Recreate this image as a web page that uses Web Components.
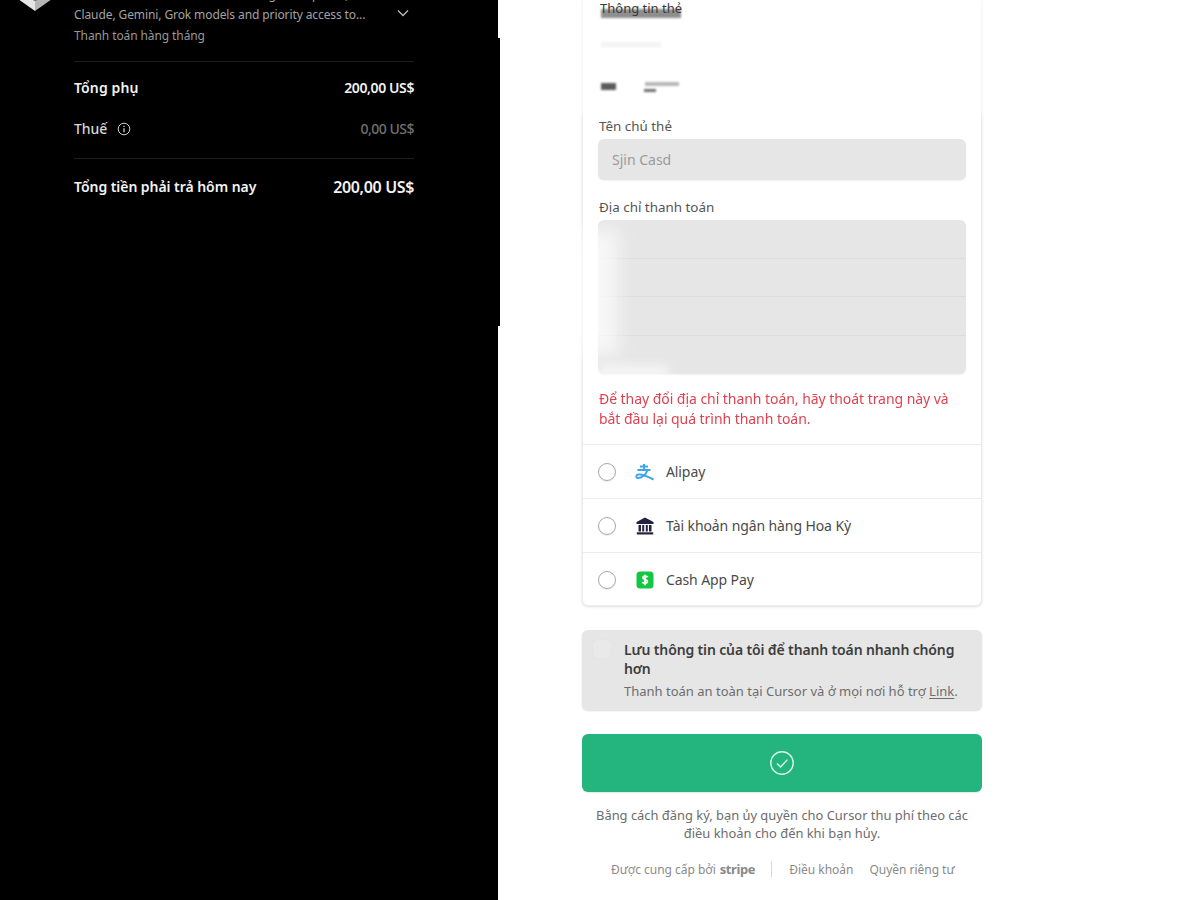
<!DOCTYPE html>
<html lang="vi"><head><meta charset="utf-8">
<style>
html,body{margin:0;height:900px;overflow:hidden;background:#fff}
body{font-family:"Noto Sans","Open Sans",sans-serif}
</style></head><body>
<checkout-page>
  <order-summary slot="left"></order-summary>
  <payment-form slot="right"></payment-form>
</checkout-page>
<script>
function def(name, html){
  customElements.define(name, class extends HTMLElement{
    constructor(){super();this.attachShadow({mode:'open'}).innerHTML=html;}
  });
}
def('checkout-page',`<style>
:host{display:flex;height:900px;width:1200px;overflow:hidden;position:relative}
.l{width:498px;flex:none;background:#000}
.r{flex:1;background:#fff;min-width:0}
.edge{position:absolute;left:498px;top:38px;width:2px;height:288px;background:#000}
</style><div class="l"><slot name="left"></slot></div><div class="r"><slot name="right"></slot></div><div class="edge"></div>`);

def('summary-row',`<style>
:host{display:flex;justify-content:space-between;align-items:center;font-size:14px;font-weight:600;color:#f2f2f2;letter-spacing:-.05px}
</style><slot></slot><slot name="v"></slot>`);

def('order-summary',`<style>
:host{display:block;color:#fff;font-family:"Noto Sans",sans-serif}
.top{display:grid;grid-template-columns:74px 1fr;margin-top:-15px;padding-right:84px;height:76px;box-sizing:border-box}
.logo{width:38px;height:26px;margin:0 0 0 16px;overflow:visible}
.desc{font-size:12px;line-height:20px;color:#a3a3a3;letter-spacing:-.1px;position:relative;white-space:nowrap}
.chev{position:absolute;right:4px;top:21px;width:14px;height:14px}
.pay{margin-top:1px;color:#989898}
.sec{margin:0 84px 0 74px;border-top:1px solid #1c1c1c}
.a{padding-top:16px;line-height:20px}
.b{margin-top:21px;line-height:20px}
.t2{margin-top:19px;padding-top:18px;line-height:20px}
.amt{letter-spacing:-.4px}
.tax{display:inline-flex;align-items:center;gap:10px;font-weight:500;color:#d6d6d6}
.zero{color:#707070;font-weight:500;font-size:14px;letter-spacing:-.5px}
.big{font-size:16px;letter-spacing:-.35px}
.lab{letter-spacing:.12px}
</style>
<div class="top">
  <svg class="logo" viewBox="0 0 38 26"><path d="M2 8 19 0 36 8 19 16Z" fill="#8f8f8f"/><path d="M2 8 19 16V26L2 14Z" fill="#e6e6e6"/><path d="M36 8 19 16V26L36 14Z" fill="#b5b5b5"/></svg>
  <div class="desc">Cursor Ultra includes 20x more usage on OpenAI,<br>Claude, Gemini, Grok models and priority access to...<div class="pay">Thanh toán hàng tháng</div>
    <svg class="chev" viewBox="0 0 14 14" fill="none" stroke="#bdbdbd" stroke-width="1.3"><path d="M2 4.5 7 9.5 12 4.5"/></svg>
  </div>
</div>
<div class="sec a"><summary-row><span class="lab">Tổng phụ</span><span slot="v" class="amt">200,00 US$</span></summary-row>
<div class="b"><summary-row><span class="tax">Thuế <svg width="14" height="14" viewBox="0 0 14 14" fill="none" stroke="#cfcfcf"><circle cx="7" cy="7" r="5.8"/><path d="M7 6.2V10.2M7 3.8V5" stroke-width="1.3"/></svg></span><span slot="v" class="zero">0,00 US$</span></summary-row></div></div>
<div class="sec t2"><summary-row><span>Tổng tiền phải trả hôm nay</span><span slot="v" class="big">200,00 US$</span></summary-row></div>`);

def('field-label',`<style>:host{display:block;font-size:13.4px;line-height:18px;color:#545454;padding-left:1px}</style><slot></slot>`);

def('pay-option',`<style>
:host{display:flex;align-items:center;height:53px;border-top:1px solid #ececec;padding-left:15px;font-size:14px;color:#4a4a4a;letter-spacing:-.1px}
.radio{width:16px;height:16px;border:1px solid #a8a8a8;border-radius:50%;flex:none;box-shadow:0 1px 1px rgba(0,0,0,.08)}
.ic{width:20px;height:20px;margin:0 11px 0 19px;flex:none;display:flex;align-items:center;justify-content:center}
</style><span class="radio"></span><span class="ic"><slot name="icon"></slot></span><slot></slot>`);

def('payment-form',`<style>
:host{display:block;font-family:"Noto Sans",sans-serif;color:#333}
.wrap{width:400px;margin-left:84px}
.card{border:1px solid #ececec;border-top:0;border-radius:0 0 6px 6px;box-shadow:0 1px 3px rgba(0,0,0,.13);background:#fff;box-sizing:border-box;height:606px;position:relative}
.veil{position:absolute;left:-8px;right:-8px;top:-4px;height:118px;background:#fff;filter:blur(2px);opacity:.6}
.sm{position:absolute;left:17px;top:-1px;font-size:13px;line-height:18px;color:#3a3a3a}
.ghost{position:absolute;background:#333;filter:blur(1.2px)}
.in{position:relative;padding:117px 15px 0 15px}
.box{background:#e6e6e6;border-radius:6px;box-shadow:0 1px 2px rgba(0,0,0,.06)}
.name{height:41px;margin-top:4px;display:flex;align-items:center;padding-left:14px;font-size:14px;color:#9b9b9b}
.addr-l{margin-top:18px}
.addr{height:154px;margin-top:4px;display:grid;grid-template-rows:repeat(4,1fr);position:relative}
.addr i{border-bottom:1px solid #dedede}
.addr i:last-of-type{border:0}
.smudge{position:absolute;left:-20px;top:10px;width:40px;height:125px;background:#fff;filter:blur(9px);opacity:.7}
.smudge2{position:absolute;left:0;bottom:-5px;width:70px;height:14px;background:#fff;filter:blur(5px);opacity:.6}
.err{margin:15px 0 15px;font-size:14px;line-height:20px;color:#dc2c3c;opacity:.9;letter-spacing:-.05px;padding-left:1px}
.save{margin-top:24px;background:#e6e6e6;border-radius:6px;box-shadow:0 1px 2px rgba(0,0,0,.14);display:grid;grid-template-columns:42px 1fr;height:80px;box-sizing:border-box;padding:10px 20px 0 0}
.save b{font-size:14px;line-height:19px;font-weight:600;color:#3d3d3d;display:block;letter-spacing:-.14px}
.save span{display:block;font-size:13px;line-height:19px;color:#6d6d6d;margin-top:4px;white-space:nowrap;letter-spacing:0}
.save u{text-underline-offset:2px}
.cb{width:18px;height:18px;background:#e9e9e9;border-radius:4px;margin:0 0 0 11px;box-shadow:0 0 1px rgba(0,0,0,.1)}
.btn{margin-top:24px;height:58px;background:#24b47e;border-radius:6px;display:flex;align-items:center;justify-content:center;box-shadow:0 1px 2px rgba(0,0,0,.1)}
.legal{margin-top:14px;text-align:center;font-size:12.9px;line-height:18px;color:#6d6d6d}
.foot{margin-top:18px;display:flex;align-items:center;justify-content:flex-start;font-size:12px;color:#8a8a8a;height:18px;padding-left:29px;letter-spacing:-.02px}
.foot b{font-weight:700;font-size:13px;letter-spacing:-.4px;margin-left:4px;color:#8a8a8a}
.bar{width:1px;height:16px;background:#d8d8d8;margin:0 17px 0 16px}
.foot span+span{margin-left:16px}
</style>
<div class="wrap">
<div class="card">
  <div class="veil"></div>
  <div class="ghost" style="left:18px;top:9px;width:80px;height:9px;opacity:.55"></div>
  <div class="sm">Thông tin thẻ</div>
  <div class="ghost" style="left:18px;top:42px;width:60px;height:5px;opacity:.05"></div>
  <div class="ghost" style="left:18px;top:83px;width:15px;height:7px;opacity:.8"></div>
  <div class="ghost" style="left:62px;top:82px;width:34px;height:4px;opacity:.35"></div>
  <div class="ghost" style="left:61px;top:89px;width:12px;height:3px;opacity:.7"></div>
  <div class="in">
    <field-label>Tên chủ thẻ</field-label>
    <div class="box name">Sjin Casd</div>
    <field-label class="addr-l">Địa chỉ thanh toán</field-label>
    <div class="box addr"><i></i><i></i><i></i><i></i><div class="smudge"></div><div class="smudge2"></div></div>
    <div class="err">Để thay đổi địa chỉ thanh toán, hãy thoát trang này và<br>bắt đầu lại quá trình thanh toán.</div>
  </div>
  <pay-option><svg slot="icon" width="20" height="18" viewBox="0 0 20 18" fill="none" stroke="#3ea6e8" stroke-width="2"><path d="M5 3.5H13M9 1V6M2.5 7H15.5M12.5 7C11 11.5 7 15 3 15 .5 15 .8 11.8 3.5 11.5 7 11 12 13 18.5 16.5"/></svg>Alipay</pay-option>
  <pay-option><svg slot="icon" width="18" height="18" viewBox="0 0 18 18" fill="#23233f"><path d="M9 .5 17.5 5V7H.5V5Z"/><path d="M2.5 8H5V14.5H2.5ZM6.2 8H8.2V14.5H6.2ZM9.8 8H11.8V14.5H9.8ZM13 8H15.5V14.5H13Z"/><path d="M.8 15.3H17.2V17.5H.8Z"/></svg>Tài khoản ngân hàng Hoa Kỳ</pay-option>
  <pay-option><svg slot="icon" width="18" height="18" viewBox="0 0 18 18"><rect width="17" height="17" x=".5" y=".5" rx="3.5" fill="#14c742"/><path d="M11.8 6.2C11 5.3 8 4.6 7 6.2 6.3 8.6 11.7 8.2 11.4 10.8 11 12.8 7.6 12.6 6.2 11.2M9 3.8V14.2" stroke="#fff" stroke-width="1.8" fill="none"/></svg>Cash App Pay</pay-option>
</div>
<div class="save"><div class="cb"></div><div><b>Lưu thông tin của tôi để thanh toán nhanh chóng hơn</b><span>Thanh toán an toàn tại Cursor và ở mọi nơi hỗ trợ <u>Link</u>.</span></div></div>
<div class="btn"><svg width="26" height="26" viewBox="0 0 26 26" fill="none" stroke="#d8f3e8" stroke-width="1.4"><circle cx="13" cy="13" r="11.2"/><path d="M8 13.4 11.6 17 18.4 9.6"/></svg></div>
<div class="legal">Bằng cách đăng ký, bạn ủy quyền cho Cursor thu phí theo các<br>điều khoản cho đến khi bạn hủy.</div>
<div class="foot"><span>Được cung cấp bởi</span><b>stripe</b><i class="bar"></i><span>Điều khoản</span><span>Quyền riêng tư</span></div>
</div>`);
</script>
</body></html>
